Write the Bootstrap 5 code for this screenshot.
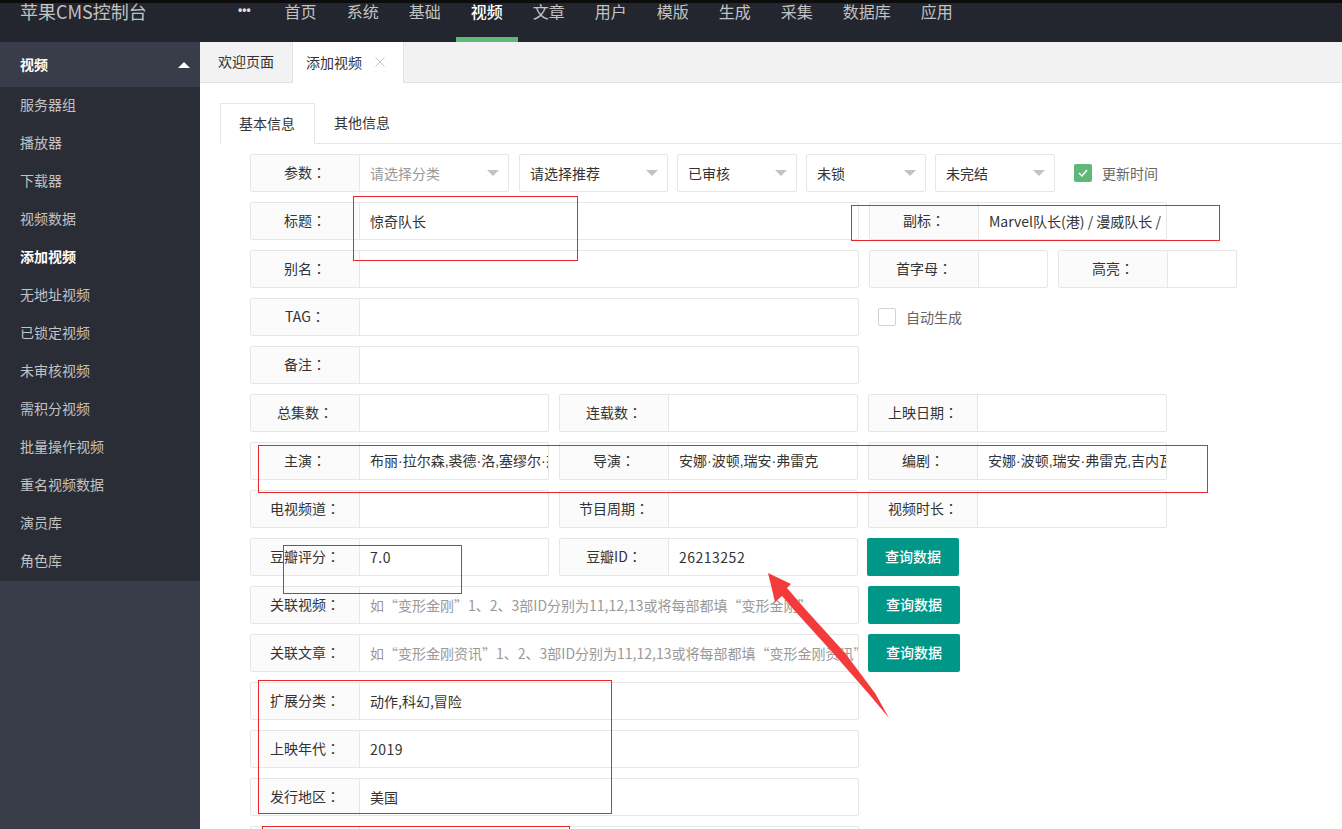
<!doctype html>
<html lang="zh-CN">
<head>
<meta charset="utf-8">
<title>苹果CMS控制台</title>
<link href="https://cdn.jsdelivr.net/npm/bootstrap@5.3.0/dist/css/bootstrap.min.css" rel="stylesheet">
<style>
html,body{height:829px;overflow:hidden}
body{font-family:"Noto Sans CJK SC","Noto Sans",sans-serif;font-size:14px;color:#333;background:#fff;position:relative}
.cln{font-family:"Noto Sans CJK TC",sans-serif}
.topbar{height:42px;background:#23262e;border-top:3px solid #0c0c0c;color:#c2c2c2}
.brand{width:200px;padding-left:20px;font-size:18px;line-height:17px;color:#c2c2c2;white-space:nowrap}
.topnav{margin-left:30px}
.topnav a{display:block;height:39px;padding:0 15px;font-size:16px;line-height:17px;color:#c2c2c2;text-decoration:none;white-space:nowrap}
.topnav a.more{padding:0 19px 0 8px;font-family:"Liberation Sans",sans-serif;font-size:12px;font-weight:700;line-height:14px;color:#ddd}
.topnav a.cur{color:#fff;font-weight:500;border-bottom:5px solid #5fb878}
.bodywrap{height:787px}
.side{width:200px;flex:none;background:#393d49;height:787px}
.sidehead{height:45px;background:#393d49;color:#fff;font-weight:700;padding:0 10px 0 20px}
.caret-up{width:0;height:0;border-left:6px solid transparent;border-right:6px solid transparent;border-bottom:6px solid #fff}
.sidelist{background:#2a2d36;height:494px;border-radius:0 0 2px 2px}
.sidelist a{display:block;height:38px;line-height:34px;padding-left:20px;color:#c2c2c2;text-decoration:none}
.sidelist a.cur{color:#fff;font-weight:700}
.mainpane{flex:1;min-width:0}
.tabstrip{height:41px;background:#f2f2f2;border-bottom:1px solid #e2e2e2}
.tabstrip span.pt{display:block;height:41px;line-height:38px;padding:0 18px;color:#333;white-space:nowrap}
.tabstrip span.on{background:#fff;border-left:1px solid #e2e2e2;border-right:1px solid #e2e2e2;padding:0 17px 2px 13px}
.tabx{margin-left:12px;display:block;flex:none}
.subtabs{height:41px;margin:20px 0 0 20px;border-bottom:1px solid #e6e6e6}
.subtabs span{display:block;height:41px;line-height:38px;padding-left:19px;width:95px;white-space:nowrap}
.subtabs span.on{background:#fff;border:1px solid #e6e6e6;border-bottom-color:#fff;padding-left:18px}
.formarea{padding:10px 0 0 50px}
.frow{height:38px;margin-bottom:10px;gap:10px}
.frow.tight{gap:9px}
.field{height:38px;border:1px solid #e6e6e6;border-radius:2px;background:#fff;overflow:hidden}
.firstfield{width:259px;margin-right:1px}
.flabel{width:109px;flex:none;height:36px;line-height:34px;background:#fbfbfb;border-right:1px solid #e6e6e6;text-align:center;white-space:nowrap}
.fval{flex:1;min-width:0;padding-left:10px;line-height:36px;white-space:nowrap;overflow:hidden;color:#333}
.fval.ph{color:#999}
.people{font-family:"Liberation Sans","Noto Sans CJK SC",sans-serif}
.digits{letter-spacing:.5px}
.w609{width:609px}.w299{width:299px}.w298{width:298px}.w179{width:179px}
.fsel{width:120px;height:38px;border:1px solid #e6e6e6;border-radius:2px;padding-left:10px;white-space:nowrap}
.fsel.wide{width:149px}
.tri{width:0;height:0;border-left:6px solid transparent;border-right:6px solid transparent;border-top:6px solid #c2c2c2;margin-right:9px}
.chkon{width:18px;height:18px;background:#5fb878;border-radius:2px}
.chkoff{width:18px;height:18px;border:1px solid #d2d2d2;border-radius:2px;background:#fff}
.chktxt{color:#666;margin-left:10px;white-space:nowrap}
.chkwrap1{margin-left:10px}
.chkwrap2{margin-left:9px}
.querybtn{width:92px;height:38px;background:#009688;color:#fff;border-radius:2px;text-align:center;font-weight:500;white-space:nowrap;border:0;padding:0 0 2px;margin-left:-1px}
.redbox{position:absolute;border:1px solid #e8262c;pointer-events:none}
.arrow{position:absolute;left:760px;top:565px}
</style>
</head>
<body>
<div class="topbar d-flex">
  <div class="brand">苹果CMS控制台</div>
  <div class="topnav d-flex">
    <a class="more" href="#">•••</a>
    <a href="#">首页</a><a href="#">系统</a><a href="#">基础</a><a class="cur" href="#">视频</a><a href="#">文章</a><a href="#">用户</a><a href="#">模版</a><a href="#">生成</a><a href="#">采集</a><a href="#">数据库</a><a href="#">应用</a>
  </div>
</div>
<div class="bodywrap d-flex">
  <div class="side">
    <div class="sidehead d-flex align-items-center justify-content-between"><span>视频</span><i class="caret-up"></i></div>
    <div class="sidelist">
      <a href="#">服务器组</a><a href="#">播放器</a><a href="#">下载器</a><a href="#">视频数据</a><a class="cur" href="#">添加视频</a><a href="#">无地址视频</a><a href="#">已锁定视频</a><a href="#">未审核视频</a><a href="#">需积分视频</a><a href="#">批量操作视频</a><a href="#">重名视频数据</a><a href="#">演员库</a><a href="#">角色库</a>
    </div>
  </div>
  <div class="mainpane">
    <div class="tabstrip d-flex">
      <span class="pt">欢迎页面</span>
      <span class="pt on d-flex align-items-center">添加视频<svg class="tabx" width="12" height="12" viewBox="0 0 12 12"><path d="M1.5 1.5l9 9M10.5 1.5l-9 9" stroke="#c4c4c4" stroke-width="1" fill="none"/></svg></span>
    </div>
    <div class="subtabs d-flex"><span class="on">基本信息</span><span>其他信息</span></div>
    <div class="formarea">
      <div class="frow tight d-flex">
        <div class="field firstfield d-flex"><div class="flabel">参数<span class="cln" lang="zh-TW">：</span></div><div class="fval ph d-flex justify-content-between align-items-center"><span>请选择分类</span><i class="tri"></i></div></div>
        <div class="fsel wide d-flex justify-content-between align-items-center"><span>请选择推荐</span><i class="tri"></i></div>
        <div class="fsel d-flex justify-content-between align-items-center"><span>已审核</span><i class="tri"></i></div>
        <div class="fsel d-flex justify-content-between align-items-center"><span>未锁</span><i class="tri"></i></div>
        <div class="fsel d-flex justify-content-between align-items-center"><span>未完结</span><i class="tri"></i></div>
        <div class="d-flex align-items-center chkwrap1"><span class="chkon d-flex align-items-center justify-content-center"><svg width="12" height="12" viewBox="0 0 12 12"><path d="M2 6l3 3 5-6" fill="none" stroke="#fff" stroke-width="1.5"/></svg></span><span class="chktxt">更新时间</span></div>
      </div>
      <div class="frow d-flex">
        <div class="field d-flex w609"><div class="flabel">标题<span class="cln" lang="zh-TW">：</span></div><div class="fval">惊奇队长</div></div>
        <div class="field d-flex w298"><div class="flabel">副标<span class="cln" lang="zh-TW">：</span></div><div class="fval">Marvel队长(港) / 漫威队长 /</div></div>
      </div>
      <div class="frow d-flex">
        <div class="field d-flex w609"><div class="flabel">别名<span class="cln" lang="zh-TW">：</span></div><div class="fval"></div></div>
        <div class="field d-flex w179"><div class="flabel">首字母<span class="cln" lang="zh-TW">：</span></div><div class="fval"></div></div>
        <div class="field d-flex w179"><div class="flabel">高亮<span class="cln" lang="zh-TW">：</span></div><div class="fval"></div></div>
      </div>
      <div class="frow d-flex">
        <div class="field d-flex w609"><div class="flabel">TAG<span class="cln" lang="zh-TW">：</span></div><div class="fval"></div></div>
        <div class="d-flex align-items-center chkwrap2"><span class="chkoff"></span><span class="chktxt">自动生成</span></div>
      </div>
      <div class="frow d-flex">
        <div class="field d-flex w609"><div class="flabel">备注<span class="cln" lang="zh-TW">：</span></div><div class="fval"></div></div>
      </div>
      <div class="frow d-flex">
        <div class="field d-flex w299"><div class="flabel">总集数<span class="cln" lang="zh-TW">：</span></div><div class="fval"></div></div>
        <div class="field d-flex w299"><div class="flabel">连载数<span class="cln" lang="zh-TW">：</span></div><div class="fval"></div></div>
        <div class="field d-flex w299"><div class="flabel">上映日期<span class="cln" lang="zh-TW">：</span></div><div class="fval"></div></div>
      </div>
      <div class="frow d-flex">
        <div class="field d-flex w299"><div class="flabel">主演<span class="cln" lang="zh-TW">：</span></div><div class="fval people">布丽·拉尔森,裘德·洛,塞缪尔·杰</div></div>
        <div class="field d-flex w299"><div class="flabel">导演<span class="cln" lang="zh-TW">：</span></div><div class="fval people">安娜·波顿,瑞安·弗雷克</div></div>
        <div class="field d-flex w299"><div class="flabel">编剧<span class="cln" lang="zh-TW">：</span></div><div class="fval people">安娜·波顿,瑞安·弗雷克,吉内瓦</div></div>
      </div>
      <div class="frow d-flex">
        <div class="field d-flex w299"><div class="flabel">电视频道<span class="cln" lang="zh-TW">：</span></div><div class="fval"></div></div>
        <div class="field d-flex w299"><div class="flabel">节目周期<span class="cln" lang="zh-TW">：</span></div><div class="fval"></div></div>
        <div class="field d-flex w299"><div class="flabel">视频时长<span class="cln" lang="zh-TW">：</span></div><div class="fval"></div></div>
      </div>
      <div class="frow d-flex">
        <div class="field d-flex w299"><div class="flabel">豆瓣评分<span class="cln" lang="zh-TW">：</span></div><div class="fval digits">7.0</div></div>
        <div class="field d-flex w299"><div class="flabel">豆瓣ID<span class="cln" lang="zh-TW">：</span></div><div class="fval digits">26213252</div></div>
        <button class="querybtn">查询数据</button>
      </div>
      <div class="frow d-flex">
        <div class="field d-flex w609"><div class="flabel">关联视频<span class="cln" lang="zh-TW">：</span></div><div class="fval ph">如“变形金刚”1、2、3部ID分别为11,12,13或将每部都填“变形金刚”</div></div>
        <button class="querybtn">查询数据</button>
      </div>
      <div class="frow d-flex">
        <div class="field d-flex w609"><div class="flabel">关联文章<span class="cln" lang="zh-TW">：</span></div><div class="fval ph">如“变形金刚资讯”1、2、3部ID分别为11,12,13或将每部都填“变形金刚资讯”</div></div>
        <button class="querybtn">查询数据</button>
      </div>
      <div class="frow d-flex"><div class="field d-flex w609"><div class="flabel">扩展分类<span class="cln" lang="zh-TW">：</span></div><div class="fval">动作,科幻,冒险</div></div></div>
      <div class="frow d-flex"><div class="field d-flex w609"><div class="flabel">上映年代<span class="cln" lang="zh-TW">：</span></div><div class="fval digits">2019</div></div></div>
      <div class="frow d-flex"><div class="field d-flex w609"><div class="flabel">发行地区<span class="cln" lang="zh-TW">：</span></div><div class="fval">美国</div></div></div>
      <div class="frow d-flex"><div class="field d-flex w609"><div class="flabel"></div><div class="fval"></div></div></div>
    </div>
  </div>
</div>
<div class="redbox" style="left:353px;top:196px;width:225px;height:65px"></div>
<div class="redbox" style="left:851px;top:205px;width:369px;height:36px"></div>
<div class="redbox" style="left:258px;top:445px;width:950px;height:48px"></div>
<div class="redbox" style="left:283px;top:545px;width:179px;height:49px"></div>
<div class="redbox" style="left:258px;top:680px;width:354px;height:134px"></div>
<div class="redbox" style="left:262px;top:826px;width:308px;height:10px"></div>
<svg class="arrow" width="135" height="160" viewBox="760 565 135 160"><path d="M768 573L791 584 787 588 806 610 845 653 875 693 889 718 868 693 833 653 794 610 782 596 775 602Z" fill="#f43b3c"/></svg>
<script src="https://cdn.jsdelivr.net/npm/bootstrap@5.3.0/dist/js/bootstrap.bundle.min.js"></script>
</body>
</html>
